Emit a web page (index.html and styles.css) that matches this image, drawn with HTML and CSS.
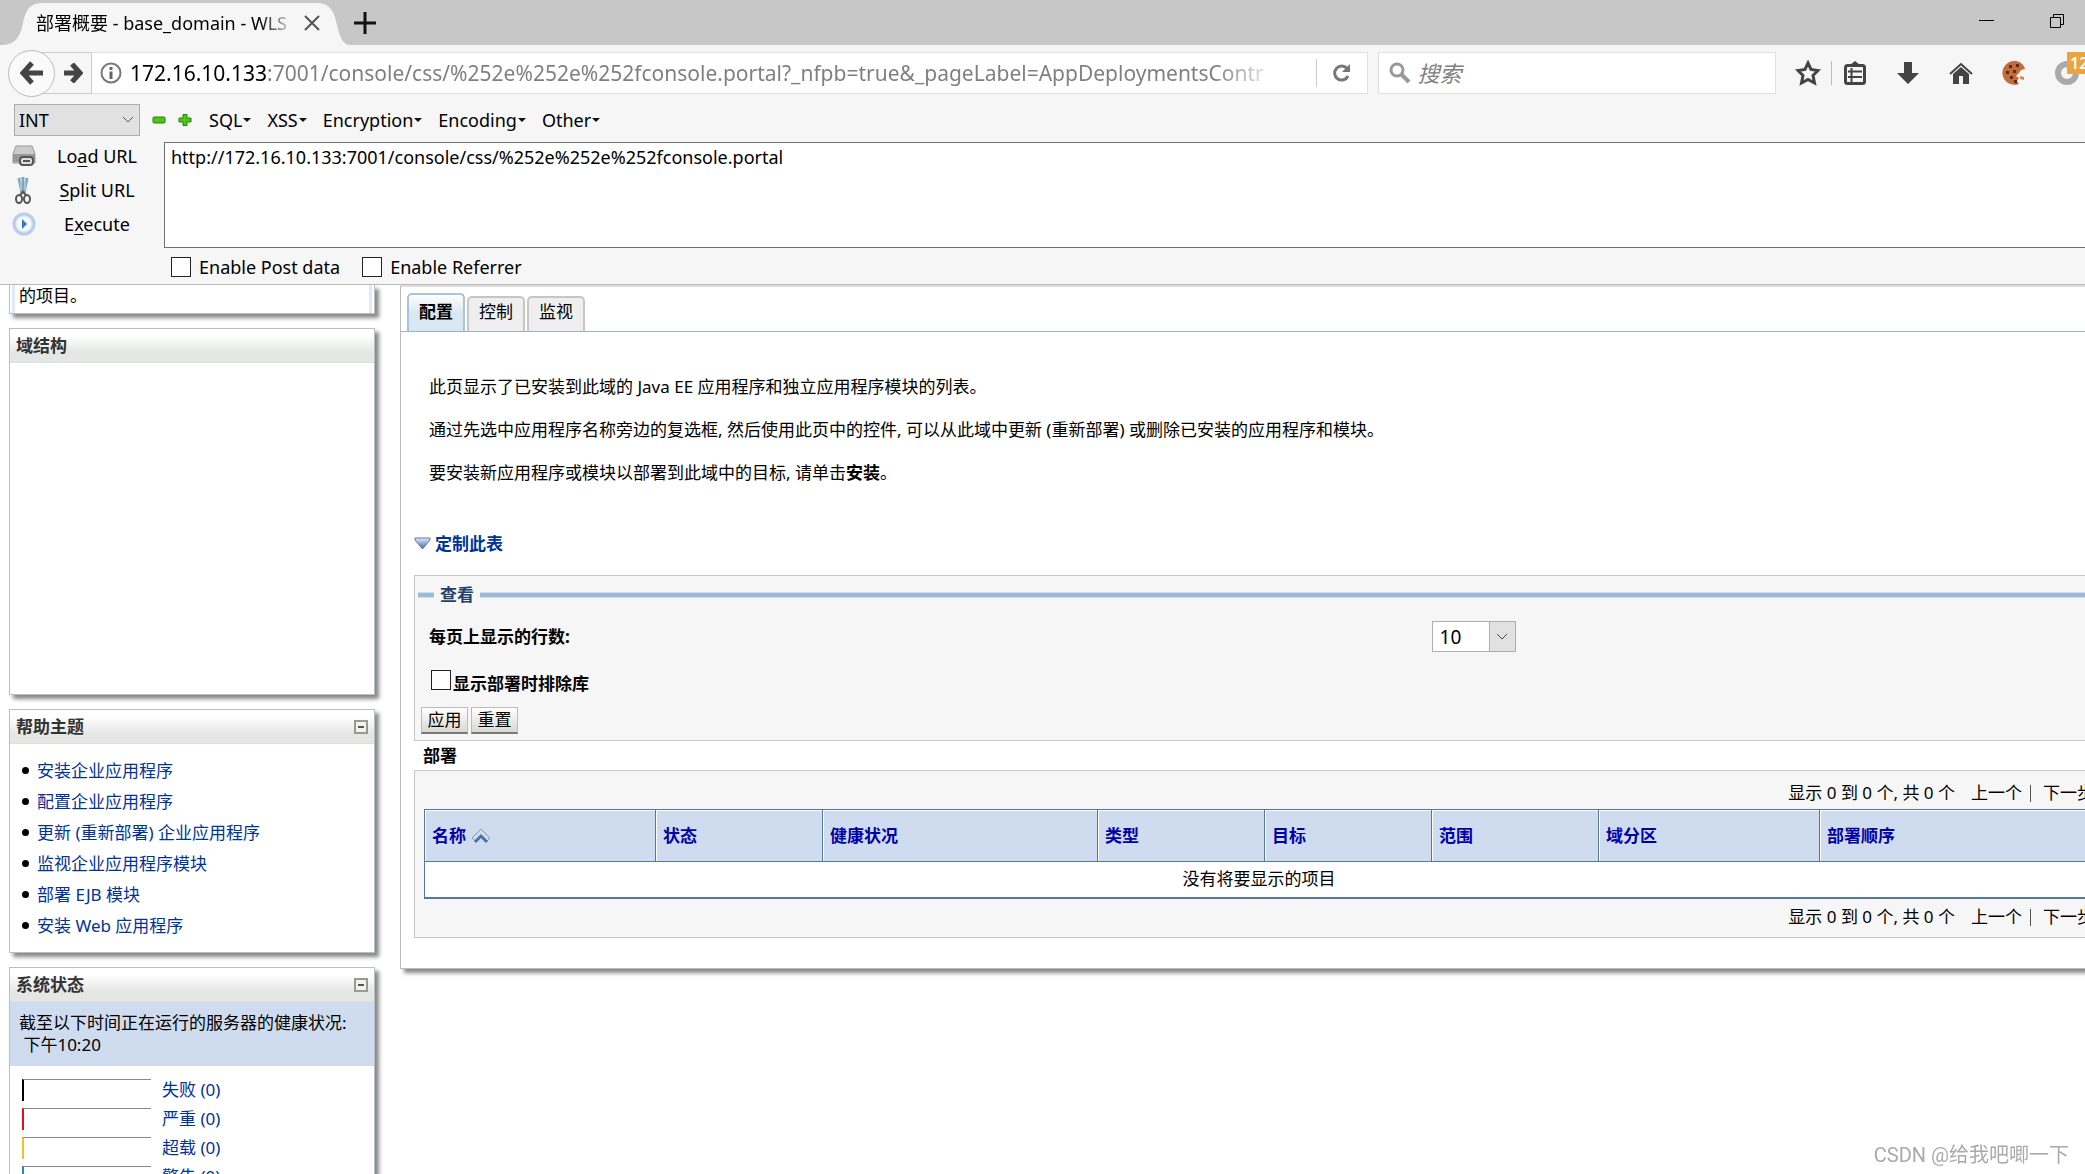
FILE: index.html
```html
<!DOCTYPE html>
<html lang="zh-CN">
<head>
<meta charset="utf-8">
<title>部署概要 - base_domain - WLS Console</title>
<link rel="stylesheet" href="styles.css">
</head>
<body>
<header class="chrome">
  <div class="tabstrip">
    <div class="browser-tab">
      <svg class="tab-shape" viewBox="0 0 350 42" preserveAspectRatio="none" aria-hidden="true"><path d="M0 42C16 42 20 34 23 20C26 6 30 0 44 0H316C330 0 334 8 337 22C340 36 344 42 350 42Z" fill="#f6f6f6"/></svg>
      <span class="tab-title">部署概要 - base_domain - WLS</span>
      <button class="plain" aria-label="关闭标签页"><svg width="16" height="16" viewBox="0 0 16 16"><path d="M1 1L15 15M15 1L1 15" stroke="#555" stroke-width="2" fill="none"/></svg></button>
    </div>
    <button class="plain new-tab" aria-label="新标签页"><svg width="22" height="22" viewBox="0 0 22 22"><path d="M11 0V22M0 11H22" stroke="#111" stroke-width="3"/></svg></button>
    <div class="window-buttons">
      <button class="plain" aria-label="最小化"><svg width="16" height="16" viewBox="0 0 16 16"><path d="M0 7.500H15" stroke="#000"/></svg></button>
      <button class="plain" aria-label="还原"><svg width="16" height="16" viewBox="0 0 16 16"><path d="M1.500 4.500H11.500V14.500H1.500ZM4.500 4V1.500H14.500V11.500H12" stroke="#000" fill="none"/></svg></button>
    </div>
  </div>

  <div class="navbar">
    <button class="plain back" aria-label="后退"><svg width="24" height="24" viewBox="0 0 24 24"><path d="M12 2L3 12L12 22M4 12H23" stroke="#444" stroke-width="5" fill="none"/></svg></button>
    <button class="plain forward" aria-label="前进"><svg width="20" height="20" viewBox="0 0 20 20"><path d="M9 1L17 10L9 19M1 10H17" stroke="#444" stroke-width="5" fill="none"/></svg></button>
    <div class="urlbox">
      <svg width="22" height="22" viewBox="0 0 22 22"><circle cx="11" cy="11" r="9.500" fill="none" stroke="#777" stroke-width="2"/><path d="M11 5V8M11 9.500V17" stroke="#666" stroke-width="3"/></svg>
      <span class="url"><b>172.16.10.133</b>:7001/console/css/%252e%252e%252fconsole.portal?_nfpb=true&amp;_pageLabel=AppDeploymentsContr</span>
      <button class="plain reload" aria-label="刷新"><svg width="20" height="20" viewBox="0 0 20 20"><path d="M15 5.500A7 7 0 1 0 16 13" stroke="#777" stroke-width="3" fill="none"/><path d="M18 1V9H10Z" fill="#777"/></svg></button>
    </div>
    <label class="searchbox">
      <svg width="22" height="22" viewBox="0 0 22 22"><circle cx="8" cy="8" r="6" fill="none" stroke="#999" stroke-width="3"/><path d="M12 12L20 20" stroke="#999" stroke-width="4"/></svg>
      <input type="text" placeholder="搜索" aria-label="搜索">
    </label>
    <div class="tools">
      <button class="plain" aria-label="收藏"><svg width="26" height="26" viewBox="0 0 26 26"><path d="M13 3L16 9.500L23 10.500L18 15.500L19.500 23L13 19.500L6.500 23L8 15.500L3 10.500L10 9.500Z" fill="none" stroke="#444" stroke-width="3"/></svg></button>
      <button class="plain clip" aria-label="书签"><svg width="22" height="24" viewBox="0 0 22 24"><path d="M6 4L11 0L16 4Z" fill="#444"/><rect x="1.500" y="4.500" width="19" height="18" rx="2" fill="none" stroke="#444" stroke-width="3"/><path d="M4 10.500H18M4 16H18M7.500 7V21" stroke="#444" stroke-width="2"/></svg></button>
      <button class="plain" aria-label="下载"><svg width="22" height="22" viewBox="0 0 22 22"><path d="M7 0H15V11H22L11 22L0 11H7Z" fill="#444"/></svg></button>
      <button class="plain" aria-label="主页"><svg width="24" height="22" viewBox="0 0 24 22"><path d="M1 12L12 2L23 12" fill="none" stroke="#444" stroke-width="2"/><path d="M4 12L12 5L20 12V22H14V14H10V22H4Z" fill="#444"/></svg></button>
      <button class="plain" aria-label="Cookie"><svg width="24" height="24" viewBox="0 0 24 24"><path d="M14 0A12 12 0 1 0 17 23L15 20L17 17L14 15L17 12L19 9L23 8C22 4 19 1 14 0Z" fill="#c16c3c"/><path d="M7 4h3v3h-3zM14 3h3v3h-3zM4 10h3v3h-3zM11 9h3v3h-3zM8 15h3v3h-3zM12 19h3v3h-3z" fill="#63291a"/><path d="M18 15l4 1v3l-4-1z" fill="#d88350"/></svg></button>
      <button class="plain ring" aria-label="扩展"><svg width="24" height="24" viewBox="0 0 24 24"><circle cx="12" cy="12" r="9" fill="none" stroke="#aaa" stroke-width="6"/></svg><span class="badge">12</span></button>
    </div>
  </div>

  <div class="hackbar-menu">
    <div class="pick pick-int">
      <select aria-label="类型"><option>INT</option></select>
      <svg width="12" height="8" viewBox="0 0 12 8"><path d="M1 1L6 6L11 1" fill="none" stroke="#555"/></svg>
    </div>
    <button class="plain" aria-label="减"><svg width="14" height="14" viewBox="0 0 14 14"><rect x="1" y="4" width="12" height="6" rx="1" fill="#4fc414" stroke="#23850a"/></svg></button>
    <button class="plain plus" aria-label="加"><svg width="14" height="14" viewBox="0 0 14 14"><path d="M5 1.500H9V5H13V9H9V12.500H5V9H1V5H5Z" fill="#4fc414" stroke="#23850a"/></svg></button>
    <button class="plain menu">SQL</button>
    <button class="plain menu">XSS</button>
    <button class="plain menu">Encryption</button>
    <button class="plain menu">Encoding</button>
    <button class="plain menu">Other</button>
  </div>

  <div class="hackbar-body">
    <div class="actions">
      <button class="plain action"><svg width="24" height="22" viewBox="0 0 24 22"><path d="M4 1H20L23 9V18H1V9Z" fill="#ccc" stroke="#999"/><path d="M1 9H23V17H1Z" fill="#999"/><rect x="8" y="12" width="13" height="8" rx="3" fill="#ddd" stroke="#555" stroke-width="2"/><path d="M11 16H18" stroke="#555" stroke-width="2"/></svg><span>Lo<u>a</u>d URL</span></button>
      <button class="plain action"><svg width="24" height="28" viewBox="0 0 24 28"><path d="M7 2L10 17M15 2L12 17M11 1V16" stroke="#7fa5bd" stroke-width="3" fill="none"/><path d="M9 3V14M13 3V14" stroke="#d5e4ee"/><ellipse cx="7" cy="23" rx="3" ry="4" fill="none" stroke="#555" stroke-width="2"/><ellipse cx="15" cy="23" rx="3" ry="4" fill="none" stroke="#555" stroke-width="2"/><path d="M8 19L11 16L14 19" stroke="#555" stroke-width="2" fill="none"/></svg><span><u>S</u>plit URL</span></button>
      <button class="plain action"><svg width="24" height="24" viewBox="0 0 24 24"><circle cx="12" cy="12" r="10" fill="#f5f9ff" stroke="#b5cdf0" stroke-width="3"/><circle cx="12" cy="12" r="8" fill="none" stroke="#ddd"/><path d="M10 7L15 12L10 17Z" fill="#3a72c4"/></svg><span>E<u>x</u>ecute</span></button>
    </div>
    <div class="request">
      <textarea aria-label="URL" spellcheck="false">http://172.16.10.133:7001/console/css/%252e%252e%252fconsole.portal</textarea>
      <div class="flags">
        <label><input type="checkbox">Enable Post data</label>
        <label><input type="checkbox">Enable Referrer</label>
      </div>
    </div>
  </div>
</header>

<div class="page">
  <aside class="sidebar">
    <section class="panel howto"><p>的项目。</p></section>
    <section class="panel domain"><h2>域结构</h2></section>
    <section class="panel">
      <h2>帮助主题<button class="plain" aria-label="折叠"><svg width="14" height="14" viewBox="0 0 14 14"><rect x="1" y="1" width="12" height="12" fill="#f2f4ec" stroke="#999b90" stroke-width="2"/><path d="M4 7H10" stroke="#555" stroke-width="2"/></svg></button></h2>
      <ul class="topics">
        <li><a href="#">安装企业应用程序</a></li>
        <li><a href="#">配置企业应用程序</a></li>
        <li><a href="#">更新 (重新部署) 企业应用程序</a></li>
        <li><a href="#">监视企业应用程序模块</a></li>
        <li><a href="#">部署 EJB 模块</a></li>
        <li><a href="#">安装 Web 应用程序</a></li>
      </ul>
    </section>
    <section class="panel">
      <h2>系统状态<button class="plain" aria-label="折叠"><svg width="14" height="14" viewBox="0 0 14 14"><rect x="1" y="1" width="12" height="12" fill="#f2f4ec" stroke="#999b90" stroke-width="2"/><path d="M4 7H10" stroke="#555" stroke-width="2"/></svg></button></h2>
      <p class="asof">截至以下时间正在运行的服务器的健康状况:<br>&nbsp;下午10:20</p>
      <ul class="health">
        <li><span class="bar failed"></span><a href="#">失败 (0)</a></li>
        <li><span class="bar critical"></span><a href="#">严重 (0)</a></li>
        <li><span class="bar overloaded"></span><a href="#">超载 (0)</a></li>
        <li><span class="bar warning"></span><a href="#">警告 (0)</a></li>
      </ul>
    </section>
  </aside>

  <main class="console">
    <nav class="tabs">
      <a class="tab active" href="#">配置</a>
      <a class="tab" href="#">控制</a>
      <a class="tab" href="#">监视</a>
    </nav>
    <div class="intro">
      <p>此页显示了已安装到此域的 Java EE 应用程序和独立应用程序模块的列表。</p>
      <p>通过先选中应用程序名称旁边的复选框, 然后使用此页中的控件, 可以从此域中更新 (重新部署) 或删除已安装的应用程序和模块。</p>
      <p>要安装新应用程序或模块以部署到此域中的目标, 请单击<b>安装</b>。</p>
    </div>
    <div class="content">
      <a class="customize" href="#"><svg width="17" height="14" viewBox="0 0 17 14"><defs><linearGradient id="tri" x1="0" y1="0" x2="0" y2="1"><stop offset="0" stop-color="#e0e9f8"/><stop offset="1" stop-color="#3f68ad"/></linearGradient></defs><path d="M1 1H16V3L8.500 12L1 3Z" fill="url(#tri)" stroke="#587ab2"/></svg>定制此表</a>
      <form class="box customize-form">
        <h3 class="legend">查看</h3>
        <div class="field rows-field">
          <label for="rows">每页上显示的行数:</label>
          <div class="pick pick-rows">
            <select id="rows"><option>10</option></select>
            <span class="drop"><svg width="12" height="8" viewBox="0 0 12 8"><path d="M1 1L6 6L11 1" fill="none" stroke="#444"/></svg></span>
          </div>
        </div>
        <div class="field check-field"><input type="checkbox" id="exclude"><label for="exclude">显示部署时排除库</label></div>
        <div class="form-buttons"><button type="button">应用</button><button type="button">重置</button></div>
      </form>
      <h3 class="table-title">部署</h3>
      <div class="box">
        <div class="pager"><span>显示 0 到 0 个, 共 0 个</span><span>上一个</span><span class="next">下一步</span></div>
        <table class="deployments">
          <colgroup><col class="c-name"><col class="c-s"><col class="c-health"><col class="c-s"><col class="c-s"><col class="c-s"><col class="c-part"><col></colgroup>
          <thead><tr>
            <th><a href="#">名称 <svg width="20" height="16" viewBox="0 0 20 16"><path d="M1 10L10 1L19 10L16 13L10 7L4 13Z" fill="#cfdcee" stroke="#7f97b8"/><path d="M3 13L10 6L17 13L15 15L10 10L5 15Z" fill="#4e709e"/></svg></a></th>
            <th><a href="#">状态</a></th><th><a href="#">健康状况</a></th><th><a href="#">类型</a></th><th><a href="#">目标</a></th><th><a href="#">范围</a></th><th><a href="#">域分区</a></th><th><a href="#">部署顺序</a></th>
          </tr></thead>
          <tbody><tr><td colspan="8">没有将要显示的项目</td></tr></tbody>
        </table>
        <div class="pager pager-bottom"><span>显示 0 到 0 个, 共 0 个</span><span>上一个</span><span class="next">下一步</span></div>
      </div>
    </div>
  </main>
</div>
<div class="watermark">CSDN @给我吧唧一下</div>
</body>
</html>
```
FILE: styles.css
```css
* { box-sizing: border-box; }
body {
  margin: 0;
  height: 100vh;
  overflow: hidden;
  display: flex;
  flex-direction: column;
  background: #fff;
  color: #000;
  font: 17px/22px "Noto Sans", "Noto Sans CJK SC", sans-serif;
}
h2, h3, p, ul { margin: 0; padding: 0; }
ul { list-style: none; }
svg { display: block; flex: none; }
a { color: #039; text-decoration: none; }
button, input, select, textarea { font: inherit; color: inherit; }
.plain { border: 0; background: none; padding: 0; margin: 0; flex: none; display: flex; align-items: center; }
input[type="checkbox"] {
  appearance: none;
  flex: none;
  width: 20px;
  height: 20px;
  margin: 0;
  border: 1px solid #222;
  background: #fff;
}

/* browser chrome */
.chrome {
  flex: none;
  background: #f6f6f6;
  border-bottom: 1px solid #bbb;
  font-size: 18px;
  line-height: 24px;
}
.tabstrip { display: flex; height: 45px; background: #c7c7c7; padding-top: 3px; }
.browser-tab {
  position: relative;
  width: 350px;
  display: flex;
  align-items: center;
  padding: 0 30px 2px 36px;
}
.tab-shape { position: absolute; inset: 0; width: 100%; height: 100%; }
.browser-tab .tab-title, .browser-tab button { position: relative; }
.tab-title {
  flex: 1;
  white-space: nowrap;
  overflow: hidden;
  margin-right: 8px;
  mask-image: linear-gradient(to right, #000 86%, transparent);
}
.new-tab { padding: 0 4px 3px; }
.window-buttons { display: flex; gap: 54px; margin-left: auto; padding: 0 20px 7px 0; }

.navbar { display: flex; align-items: center; padding: 4px 5px 4px 8px; height: 56px; }
.back {
  width: 47px;
  height: 47px;
  border: 1px solid #bbb;
  border-radius: 50%;
  justify-content: center;
  background: #fafafa;
  z-index: 1;
}
.forward {
  width: 50px;
  height: 42px;
  margin-left: -13px;
  padding-left: 20px;
  border: 1px solid #ccc;
}
.urlbox, .searchbox {
  display: flex;
  align-items: center;
  height: 42px;
  background: #fff;
  border: 1px solid #e0e0e0;
}
.urlbox { flex: 1282 1 0; min-width: 0; padding-left: 8px; border-left: 0; font-size: 21px; }
.url {
  flex: 1;
  min-width: 0;
  overflow: hidden;
  white-space: nowrap;
  color: #808080;
  margin: 0 34px 0 8px;
  line-height: 30px;
  mask-image: linear-gradient(to right, #000 94%, transparent);
}
.url b { color: #000; font-weight: 400; }
.reload { width: 51px; height: 28px; border-left: 1px solid #ccc; justify-content: center; }
.searchbox { flex: 390 1 0; min-width: 0; margin-left: 10px; padding-left: 10px; }
.searchbox input { flex: 1; min-width: 0; border: 0; padding: 0 6px; background: none; font-size: 22px; font-style: italic; outline: 0; }
.searchbox input::placeholder { color: #808080; }
.tools { display: flex; align-items: center; margin-left: 19px; }
.tools button { width: 53px; height: 24px; justify-content: center; }
.tools button:first-child { width: 26px; }
.tools button.clip { border-left: 1px solid #bbb; margin: 0 4px 0 10px; width: 46px; }
.tools button.ring { position: relative; width: 32px; margin: 0 -5px 0 13px; justify-content: flex-start; padding-left: 2px; }
.badge {
  position: absolute;
  left: 14px;
  top: -9px;
  width: 28px;
  height: 22px;
  padding-left: 3px;
  background: #eda33e;
  color: #fff;
  font-size: 16px;
  line-height: 22px;
  font-weight: 600;
  text-align: left;
}

.hackbar-menu { display: flex; align-items: center; padding: 0 14px; height: 38px; }
.pick { display: grid; align-items: center; }
.pick > * { grid-area: 1 / 1; }
.pick > svg, .pick > .drop { justify-self: end; pointer-events: none; }
.pick select { appearance: none; width: 100%; height: 100%; border: 1px solid #adadad; border-radius: 0; }
.pick-int { width: 126px; height: 32px; margin-right: 12px; }
.pick-int select { background: #e1e1e1; padding: 0 4px; }
.pick-int > svg { margin-right: 6px; }
.plus { margin: 0 17px 0 12px; }
.menu { margin-right: 16px; }
.menu::after { content: ""; border: 4px solid transparent; border-top-color: #111; border-bottom: 0; margin-left: 1px; }

.hackbar-body { display: flex; height: 145px; }
.actions { width: 164px; padding-left: 12px; }
.action { height: 34px; width: 100%; }
.action span { flex: 1; padding-right: 12px; text-align: center; }
.action u { text-underline-offset: 3px; }
.action svg { margin-right: 6px; }
.request { flex: 1; min-width: 0; padding-top: 3px; }
.request textarea {
  display: block;
  width: calc(100% + 10px);
  height: 106px;
  resize: none;
  border: 1px solid #707070;
  background: #fff;
  padding: 2px 6px;
}
.flags { display: flex; gap: 22px; padding: 7px 7px 0; }
.flags label { display: flex; align-items: center; gap: 8px; }

/* console page */
.page { flex: 1; min-height: 0; display: flex; align-items: flex-start; gap: 25px; padding-left: 9px; }
.sidebar { flex: none; width: 366px; display: flex; flex-direction: column; gap: 14px; }
.panel { border: 1px solid #b9bfc4; background: #fff; box-shadow: 4px 4px 4px #888; }
.howto { border-top: 0; padding: 0 2px; }
.howto p { border: solid #dfe9f9; border-width: 0 3px; padding: 0 4px 6px; }
.domain { height: 367px; }
.panel h2 {
  display: flex;
  align-items: center;
  justify-content: space-between;
  height: 34px;
  padding: 0 6px;
  font-size: 17px;
  color: #333;
  border-bottom: 1px solid #dcdfdd;
  background: linear-gradient(#fff 20%, #e5e7e5 70%);
}
.topics { padding: 11px 0 11px 12px; }
.topics li { display: flex; align-items: center; gap: 8px; height: 31px; }
.topics li::before { content: ""; width: 7px; height: 7px; border-radius: 50%; background: #000; }
.asof { background: #cfdcef; padding: 10px 9px; height: 64px; }
.health { padding: 9px 12px; }
.health li { display: flex; align-items: center; gap: 11px; height: 29px; }
.bar { width: 129px; height: 22px; border-top: 1px solid #888; border-left: 2px solid; }
.failed { border-left-color: #000; }
.critical { border-left-color: #e01020; }
.overloaded { border-left-color: #f5c020; }
.warning { border-left-color: #2090a0; }

.console {
  flex: 1;
  min-width: 0;
  margin-right: -30px;
  border: solid #bbb;
  border-width: 2px 1px 1px;
  border-top-color: #ddd;
  box-shadow: 4px 4px 4px #888;
  padding-bottom: 30px;
}
.tabs {
  display: flex;
  align-items: flex-end;
  gap: 2px;
  padding: 6px 0 0 6px;
  border-bottom: 1px solid #9ab3cd;
}
.tab {
  color: #000;
  height: 35px;
  padding: 3px 10px;
  background: #efefef;
  border: 2px solid #c6c6c6;
  border-bottom: 0;
  border-radius: 5px 5px 0 0;
}
.tab.active { height: 38px; padding-top: 6px; padding-bottom: 6px; font-weight: 700; background: linear-gradient(#fff, #d9e7f0 50%); border-color: #a9c3e0; }
.intro { display: flex; flex-direction: column; gap: 21px; padding: 44px 28px 49px; white-space: nowrap; }
.content { padding: 0 10px 0 13px; }
.customize { display: flex; align-items: center; gap: 4px; font-weight: 700; margin-bottom: 20px; }
.box { border: 1px solid #c8c8c8; background: #f6f6f6; }
.customize-form { padding: 8px 3px 6px; }
.legend { display: flex; align-items: center; gap: 6px; font-size: 17px; color: #243f6b; }
.legend::before, .legend::after { content: ""; height: 4px; background: #9fbad6; border: solid #cfdeea; border-width: 1px 0; }
.legend::before { width: 16px; }
.legend::after { flex: 1; }
.field { padding-left: 11px; }
.field label { font-weight: 700; }
.rows-field { display: grid; grid-template-columns: 60% 84px; align-items: center; margin-top: 15px; }
.pick-rows { height: 31px; }
.pick-rows select { background: #fff; font-size: 19px; padding: 0 7px; }
.drop { display: grid; place-items: center; width: 27px; height: 31px; background: #e1e1e1; border: 1px solid #adadad; }
.check-field { display: flex; align-items: flex-start; gap: 2px; margin-top: 18px; padding-left: 13px; }
.check-field label { padding-top: 3px; }
.form-buttons { display: flex; gap: 3px; margin: 12px 3px 0; }
.form-buttons button {
  height: 27px;
  width: 47px;
  padding: 0;
  border: 1px solid #bbb;
  border-bottom: 2px solid #777;
  background: linear-gradient(#fff, #d8d9d2);
}
.table-title { font-size: 17px; padding: 4px 9px 3px; }
.pager { display: flex; justify-content: flex-end; gap: 16px; padding: 11px 9px 5px; white-space: nowrap; }
.pager-bottom { padding: 7px 9px 9px; }
.next::before { content: ""; display: inline-block; width: 1px; height: 17px; margin: 0 12px 0 -8px; vertical-align: -3px; background: #555; }
.deployments {
  width: calc(100% - 18px);
  margin: 0 9px;
  table-layout: fixed;
  border-collapse: collapse;
  border: 1px solid #54779c;
  border-bottom-width: 2px;
  background: #fff;
}
.c-name { width: 231px; }
.c-s { width: 167px; }
.c-health { width: 275px; }
.c-part { width: 221px; }
.deployments th { height: 52px; padding: 0 7px; text-align: left; background: #cfdcef; border: 1px solid #54779c; box-shadow: inset 1px 1px #fff; }
.deployments th a { color: #0000a8; display: flex; align-items: center; gap: 5px; }
.deployments td { height: 36px; padding: 0; text-align: center; }

.watermark {
  position: fixed;
  right: 16px;
  bottom: 7px;
  font-family: Roboto, "Noto Sans CJK SC", sans-serif;
  font-size: 20px;
  line-height: 24px;
  color: #aaa;
  text-shadow: 1px 1px #fff;
}
```
